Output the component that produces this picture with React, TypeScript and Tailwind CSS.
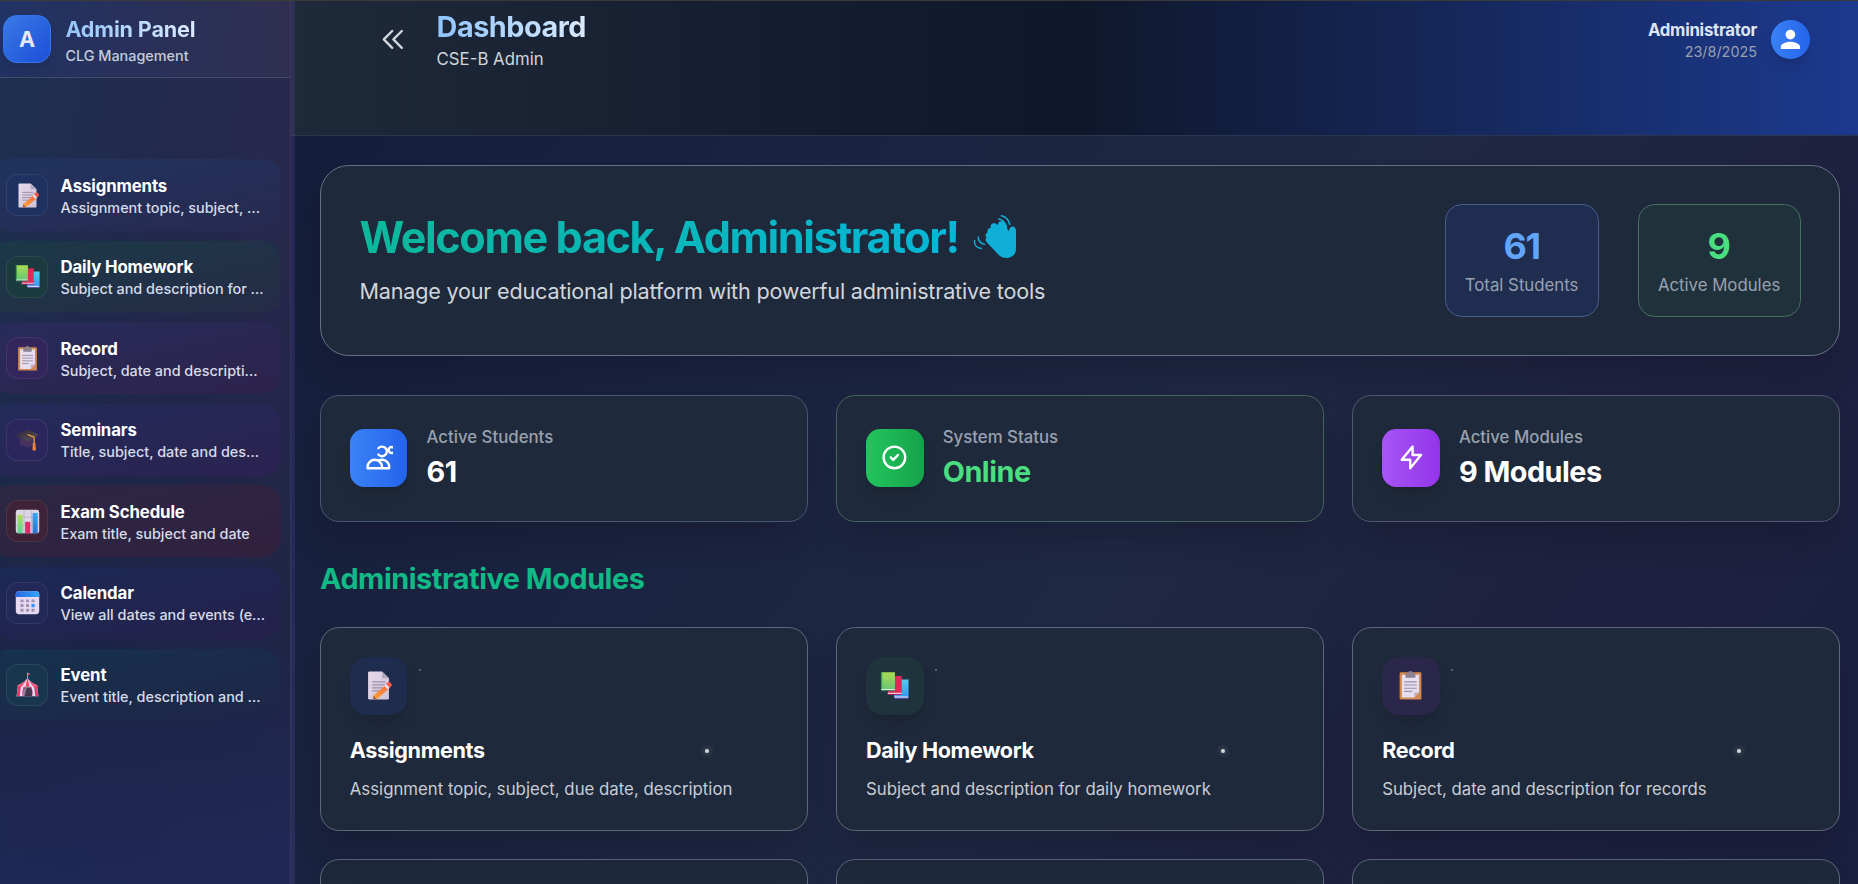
import React from "react";

type IconProps = { className?: string };

const MemoIcon = ({ className }: IconProps) => (
  <svg viewBox="0 0 32 32" className={className}>
    <defs>
      <linearGradient id="memoPage" x1="0" y1="0" x2="1" y2="1">
        <stop offset="0" stopColor="#e6d9ea" />
        <stop offset="1" stopColor="#cfc5d8" />
      </linearGradient>
      <linearGradient id="memoPencil" x1="0" y1="1" x2="1" y2="0">
        <stop offset="0" stopColor="#ffa63d" />
        <stop offset="1" stopColor="#f1683c" />
      </linearGradient>
    </defs>
    <path d="M4.500 2A1.500 1.500 0 0 1 6 .5H20L27.500 8v22a1.500 1.500 0 0 1-1.500 1.500H6A1.500 1.500 0 0 1 4.500 30z" fill="url(#memoPage)" />
    <path d="M20 .5V6.500A1.500 1.500 0 0 0 21.500 8H27.500z" fill="#b3a9bd" />
    <path d="M9.500 12h13.500M9.500 15.300h13.500M9.500 18.600h11M9.500 21.900h7" stroke="#9b90a6" strokeWidth="1.200" strokeLinecap="round" />
    <path d="M24.200 15.300l3.900 3.800L15 30.500l-4.600.800 0-4.200z" fill="url(#memoPencil)" />
    <path d="M10.400 27.200l3.400 3.600-3.600.500z" fill="#9d4a4a" />
    <path d="M24.400 14.300l4.100 4.200-2.300 2-4-4.100z" fill="#e8dcf0" />
    <path d="M26 12.600a2 2 0 0 1 2.800 0l1.300 1.400a2 2 0 0 1 0 2.800l-1.700 1.600-4.100-4.200z" fill="#fb5a4b" />
  </svg>
);

const BooksIcon = ({ className }: IconProps) => (
  <svg viewBox="0 0 32 32" className={className}>
    <defs>
      <linearGradient id="bookGreen" x1="0" y1="0" x2="0" y2="1">
        <stop offset="0" stopColor="#a8dc50" />
        <stop offset="1" stopColor="#66c977" />
      </linearGradient>
      <linearGradient id="bookBlue" x1="0" y1="0" x2="0" y2="1">
        <stop offset="0" stopColor="#55c8f5" />
        <stop offset="1" stopColor="#3597f3" />
      </linearGradient>
    </defs>
    <path d="M17 9.500h14.500v20H17a1.500 1.500 0 0 1-1.500-1.500V11z" fill="url(#bookBlue)" />
    <path d="M16 28h15v1.600H16z" fill="#dcd4f6" />
    <path d="M16 29.600h15.500v1H16z" fill="#5b57c5" />
    <path d="M9 5.500h15v19.500H9z" fill="#dc2b58" />
    <path d="M8.500 24H24v1.400H8.500z" fill="#f2c5dd" />
    <path d="M8.500 25.400H24v1H8.500z" fill="#a82459" />
    <path d="M2 1.500h14.500v19H1.500V2z" fill="url(#bookGreen)" />
    <path d="M1 2a.8.8 0 0 1 1.500-.500v19.800H1z" fill="#3f9c56" />
    <path d="M1.500 19.900h15v1.400h-15z" fill="#dff0ea" />
    <path d="M1.500 21.300h15v1h-15z" fill="#2f7d59" />
  </svg>
);

const ClipboardIcon = ({ className }: IconProps) => (
  <svg viewBox="0 0 32 32" className={className}>
    <rect x="4" y="1.500" width="24" height="30" rx="1.500" fill="#d28a50" />
    <path d="M6.500 4h19v19.500l-5.500 5.800H6.500z" fill="#e6dff0" />
    <path d="M25.500 23.500h-4a1.500 1.500 0 0 0-1.500 1.500v4.300z" fill="#bfb4cc" />
    <path d="M9.500 12h13M9.500 15.500h13M9.500 19h13M9.500 22.500h8" stroke="#9c90aa" strokeWidth="1.200" strokeLinecap="round" />
    <path d="M10.500 2.500H13.500a2.500 2.500 0 0 1 5 0H21.500v4a1 1 0 0 1-1 1h-9a1 1 0 0 1-1-1z" fill="#8b8391" />
  </svg>
);

const CapIcon = ({ className }: IconProps) => (
  <svg viewBox="0 0 32 32" className={className}>
    <defs>
      <linearGradient id="capTop" x1="0" y1="0" x2="1" y2="1">
        <stop offset="0" stopColor="#2e2933" />
        <stop offset="1" stopColor="#5d5262" />
      </linearGradient>
    </defs>
    <path d="M6 11v9.500c0 2.500 5 5 10.500 5S26 23 26 20.500V11z" fill="#46315f" />
    <path d="M1 10.500L15.500 3.500 31 9.500 17 18.500z" fill="url(#capTop)" />
    <path d="M16 9.500l8.500 3.500v9" fill="none" stroke="#f0a62c" strokeWidth="1.500" />
    <path d="M23 20.500h3l.800 8.500a2.500 2.500 0 0 1-4.500 0z" fill="#f0823a" />
  </svg>
);

const ChartIcon = ({ className }: IconProps) => (
  <svg viewBox="0 0 32 32" className={className}>
    <defs>
      <linearGradient id="barGreen" x1="0" y1="0" x2="0" y2="1">
        <stop offset="0" stopColor="#aede52" />
        <stop offset="1" stopColor="#56d69a" />
      </linearGradient>
      <linearGradient id="barBlue" x1="0" y1="0" x2="0" y2="1">
        <stop offset="0" stopColor="#38a9ef" />
        <stop offset="1" stopColor="#2b72cf" />
      </linearGradient>
    </defs>
    <rect x="1" y="1" width="30" height="30" rx="3" fill="#dcd6e4" />
    <path d="M11.500 1v30M21 1v30M1 10.500h30M1 21h30" stroke="#b8b0c4" strokeWidth="1" />
    <rect x="3.200" y="7.500" width="6.500" height="23.500" fill="url(#barGreen)" />
    <rect x="13" y="16.500" width="6.500" height="14.500" fill="#dc2d66" />
    <rect x="22.500" y="5" width="6.500" height="26" fill="url(#barBlue)" />
  </svg>
);

const CalendarIcon = ({ className }: IconProps) => (
  <svg viewBox="0 0 32 32" className={className}>
    <defs>
      <linearGradient id="calTop" x1="0" y1="0" x2="1" y2="0">
        <stop offset="0" stopColor="#2766e0" />
        <stop offset="1" stopColor="#35a8fb" />
      </linearGradient>
    </defs>
    <rect x="1" y="1.500" width="30" height="29.500" rx="4" fill="#e6d9f0" />
    <path d="M1 9V5.500a4 4 0 0 1 4-4h22a4 4 0 0 1 4 4V9z" fill="url(#calTop)" />
    <g fill="#a093b4">
      <rect x="7" y="12" width="4" height="3.800" rx=".8" />
      <rect x="14" y="12" width="4" height="3.800" rx=".8" />
      <rect x="21" y="12" width="4" height="3.800" rx=".8" />
      <rect x="7" y="18" width="4" height="3.800" rx=".8" />
      <rect x="14" y="18" width="4" height="3.800" rx=".8" />
      <rect x="7" y="24" width="4" height="3.800" rx=".8" />
      <rect x="14" y="24" width="4" height="3.800" rx=".8" />
      <rect x="21" y="24" width="4" height="3.800" rx=".8" />
    </g>
    <rect x="21" y="17.800" width="4.200" height="4.200" rx=".8" fill="#2c93f0" />
  </svg>
);

const TentIcon = ({ className }: IconProps) => (
  <svg viewBox="0 0 32 32" className={className}>
    <path d="M16 1v8" stroke="#e29a3a" strokeWidth="1.300" />
    <path d="M16.500 1l3.800 1.600-3.800 2z" fill="#ee4a5c" />
    <path d="M16 7.500c2 4 6.500 7 12.500 9.500v2l1.500 12H2l1.500-12v-2C9.500 14.500 14 11.500 16 7.500z" fill="#e4dcf2" />
    <path d="M16 7.500c-2 4-6.500 7-12.500 9.500l-.300 2.500 4 .500C11 17 14 12 16 7.500z" fill="#f0587a" />
    <path d="M16 7.500c2 4 6.500 7 12.500 9.500l.300 2.500-4 .500C21 17 18 12 16 7.500z" fill="#f0587a" />
    <path d="M16 7.500l-2.700 11.500h5.400z" fill="#ee4a5c" />
    <path d="M3.500 19h4l-1.500 12H2zM28.500 19h-4L26 31h4zM10.800 19h3.200l-3.500 6-2 6z M21.200 19H18l3.500 6 2 6z" fill="#e8386f" />
    <path d="M10 31v-5.500a6 6 0 0 1 12 0V31z" fill="#46364f" />
    <path d="M10 31v-5.500c0-3 3-5.500 5-5.500-1 4-2 8-3 11z" fill="#8d8098" />
  </svg>
);

const WaveIcon = ({ className }: IconProps) => (
  <svg viewBox="0 0 70 65" className={className} fill="none">
    <path
      d="M27.500 33.500c-2-1.700-.8-4.600 1.300-4.900-1.200-2.300.4-4.700 2.900-4.600-.7-3 1-5.300 4-4.800 1.700.3 2.400 1.200 2.900 2.200.3-2.500 1.400-4.200 3.300-4.200 2 0 3 1.200 4 2.900l3.700 7.200c1-2.200 1.400-4.200 3.400-4.700 2.200-.4 4 1.400 4 4.100v18c0 5.300-3.600 9.200-9.500 9.200-4 0-6.200-1.600-8.500-3.700L27.700 38.300c-1.500-1.600-1.600-3.400-.2-4.800z"
      fill="#0fafd8"
    />
    <path d="M39.800 15.100c4 .8 6.400 3.800 7.800 8.200M42.500 11.800c4.800.9 7 4 8.300 8.600M15.500 36.600c-.4 4.400 2.400 7.300 6.800 7.800M19.200 33c0 4 2.700 6.400 6.300 7.400" stroke="#10b1d8" strokeWidth="1.500" strokeLinecap="round" />
  </svg>
);

type NavItem = {
  title: string;
  text: string;
  Icon: React.FC<IconProps>;
  card: string;
  box: string;
};

const nav: NavItem[] = [
  { title: "Assignments", text: "Assignment topic, subject, due date, description", Icon: MemoIcon, card: "from-[#1e3460] to-[#28294f]", box: "bg-[#1f3161]" },
  { title: "Daily Homework", text: "Subject and description for daily homework", Icon: BooksIcon, card: "from-[#1a3948] to-[#252b46]", box: "bg-[#1b3b3f]" },
  { title: "Record", text: "Subject, date and description for records", Icon: ClipboardIcon, card: "from-[#272b5a] to-[#2d234c]", box: "bg-[#33265c]" },
  { title: "Seminars", text: "Title, subject, date and description", Icon: CapIcon, card: "from-[#222b5a] to-[#2b2250]", box: "bg-[#2c265f]" },
  { title: "Exam Schedule", text: "Exam title, subject and date", Icon: ChartIcon, card: "from-[#2c2844] to-[#30203e]", box: "bg-[#3e2338]" },
  { title: "Calendar", text: "View all dates and events (exams, seminars)", Icon: CalendarIcon, card: "from-[#1a2a56] to-[#24204a]", box: "bg-[#222858]" },
  { title: "Event", text: "Event title, description and date", Icon: TentIcon, card: "from-[#15324d] to-[#1e2547]", box: "bg-[#18374f]" },
];

const Sidebar = () => (
  <aside className="relative flex h-full w-[291px] shrink-0 flex-col overflow-hidden border-r border-[#38365a] bg-[linear-gradient(100deg,#1d3050_0%,#24294d_50%,#2d294c_100%)]">
    <div className="absolute inset-0 bg-[linear-gradient(172deg,rgba(22,34,66,0)_20%,rgba(25,34,66,0.7)_75%,rgba(28,40,92,0.75)_100%)]" />
    <div className="relative flex h-[77px] shrink-0 items-center gap-[14.4px] border-b border-[#434b6b] bg-[linear-gradient(95deg,#213365_0%,#2a3057_60%,#302f51_100%)] pl-[3px]">
      <div className="flex size-12 items-center justify-center rounded-[14.4px] border border-[#3b82f6]/60 bg-gradient-to-br from-[#3b79e6] to-[#1d4ed8] text-[21.6px] font-bold text-[#e5e9f3] shadow-lg">A</div>
      <div className="flex flex-col pt-[4px]">
        <span className="w-fit bg-gradient-to-r from-[#93c5fd] to-[#dbeafe] bg-clip-text text-[21.6px] leading-[29px] font-bold tracking-[-0.15px] text-transparent">Admin Panel</span>
        <span className="text-[14.4px] leading-[24px] font-medium text-[#c5cddc]">CLG Management</span>
      </div>
    </div>
    <nav className="relative mt-[81px] -ml-[9px] flex flex-col gap-[9.6px] pr-[9px]">
      {nav.map(({ title, text, Icon, card, box }) => (
        <div key={title} className={`flex h-[72px] items-center gap-[12.500px] rounded-[19.2px] bg-gradient-to-br pr-[15.500px] pl-[15px] ${card}`}>
          <div className={`flex size-[42px] shrink-0 items-center justify-center rounded-[12px] border border-white/8 ${box}`}>
            <Icon className="size-[25px]" />
          </div>
          <div className="flex min-w-0 flex-1 flex-col pt-[3px]">
            <span className="text-[16.8px] leading-[22px] font-bold tracking-[-0.12px] text-white">{title}</span>
            <span className="truncate text-[14.4px] leading-[22px] font-medium text-[#d6dce8]">{text}</span>
          </div>
        </div>
      ))}
    </nav>
  </aside>
);

const TopBar = () => (
  <header className="flex h-[135px] shrink-0 items-start justify-between border-b border-[#2a3550] bg-[linear-gradient(90deg,#1e2939_0%,#0f172a_50%,#1c398e_100%)] pr-[48px] pl-[88px]">
    <div className="flex items-start gap-[28.800px]">
      <svg viewBox="0 0 24 24" className="mt-[24px] size-[28.8px]" fill="none" stroke="#d1d5dc" strokeWidth="2" strokeLinecap="round" strokeLinejoin="round">
        <path d="M11 19l-7-7 7-7m8 14l-7-7 7-7" />
      </svg>
      <div className="flex flex-col pt-[7px]">
        <span className="w-fit bg-gradient-to-r from-[#8ec5ff] to-[#dbeafe] bg-clip-text text-[28.8px] leading-[38.4px] font-bold tracking-[-0.47px] text-transparent">Dashboard</span>
        <span className="mt-px text-[16.8px] leading-[24px] text-[#d1d5dc]">CSE-B Admin</span>
      </div>
    </div>
    <div className="mt-[17px] flex items-center gap-[14px]">
      <div className="flex flex-col items-end">
        <span className="text-[16.8px] leading-[24px] font-bold tracking-[-0.27px] text-[#dde4f2]">Administrator</span>
        <span className="text-[14.4px] leading-[19.2px] text-[#99a1af]">23/8/2025</span>
      </div>
      <div className="-mt-px flex size-[39px] items-center justify-center rounded-full bg-gradient-to-r from-[#3b82f6] to-[#2563eb] shadow-lg">
        <svg viewBox="0 0 24 24" className="size-[28.8px]" fill="#ffffff">
          <path d="M12 12c2.210 0 4-1.790 4-4s-1.790-4-4-4-4 1.790-4 4 1.790 4 4 4zm0 2c-2.670 0-8 1.340-8 4v2h16v-2c0-2.660-5.330-4-8-4z" />
        </svg>
      </div>
    </div>
  </header>
);

const panel = "border bg-[#1e293b] shadow-[0_24px_30px_-6px_rgba(20,20,40,0.35)]";

const Welcome = () => (
  <section className={`flex h-[191px] shrink-0 items-center justify-between rounded-[28.8px] border-[#667085] px-[38.4px] ${panel}`}>
    <div className="flex flex-col">
      <h1 className="flex items-center bg-[linear-gradient(90deg,#10b981_-35%,#06b6d4_80%)] bg-clip-text text-[43.2px] leading-[48px] font-bold tracking-[-1.39px] text-transparent">
        Welcome back, Administrator!
        <WaveIcon className="-my-2 h-[65px] w-[70px]" />
      </h1>
      <p className="mt-[13.500px] text-[21.6px] leading-[33.6px] tracking-[-0.195px] text-[#d1d5dc]">Manage your educational platform with powerful administrative tools</p>
    </div>
    <div className="flex gap-[39px]">
      <div className="flex h-[113px] w-[154px] flex-col items-center rounded-[16.8px] border border-[#475d8c] bg-[#1e2d50] pt-[20px]">
        <span className="text-[36px] leading-[43.200px] font-bold tracking-[-1.4px] text-[#60a5fa]">61</span>
        <span className="mt-[5px] text-[16.8px] leading-[24px] text-[#99a1af]">Total Students</span>
      </div>
      <div className="flex h-[113px] w-[163px] flex-col items-center rounded-[16.8px] border border-[#467060] bg-[#1f313b] pt-[20px]">
        <span className="text-[36px] leading-[43.200px] font-bold text-[#4ade80]">9</span>
        <span className="mt-[5px] text-[16.8px] leading-[24px] text-[#99a1af]">Active Modules</span>
      </div>
    </div>
  </section>
);

const stats = [
  {
    label: "Active Students",
    value: "61",
    color: "text-white",
    border: "border-[#475672]",
    tile: "from-[#3b82f6] to-[#2563eb]",
    path: "M12 4.354a4 4 0 110 5.292M15 21H3v-1a6 6 0 0112 0v1zm0 0h6v-1a6 6 0 00-9-5.197m13.5-9a2.500 2.500 0 11-5 0 2.500 2.500 0 015 0z",
  },
  {
    label: "System Status",
    value: "Online",
    color: "text-[#4ade80]",
    border: "border-[#46645f]",
    tile: "from-[#22c55e] to-[#16a34a]",
    path: "M9 12l2 2 4-4m6 2a9 9 0 11-18 0 9 9 0 0118 0z",
  },
  {
    label: "Active Modules",
    value: "9 Modules",
    color: "text-white",
    border: "border-[#535672]",
    tile: "from-[#a855f7] to-[#9333ea]",
    path: "M13 10V3L4 14h7v7l9-11h-7z",
  },
];

const modules = [
  { title: "Assignments", text: "Assignment topic, subject, due date, description", Icon: MemoIcon, tile: "bg-[#1e2c4d]" },
  { title: "Daily Homework", text: "Subject and description for daily homework", Icon: BooksIcon, tile: "bg-[#1e333b]" },
  { title: "Record", text: "Subject, date and description for records", Icon: ClipboardIcon, tile: "bg-[#2b274a]" },
];

export default function App() {
  return (
    <div className="flex h-[884px] w-[1858px] flex-col overflow-hidden bg-[#1a2340] font-['Inter',sans-serif] antialiased">
      <div className="h-px shrink-0 bg-[#3a3a38]" />
      <div className="flex min-h-0 flex-1">
        <Sidebar />
        <div className="relative flex min-w-0 flex-1 flex-col bg-[linear-gradient(125deg,#131c38_0%,#1b2440_35%,#1f2843_55%,#1e213f_78%,#1b2040_100%)]">
          <TopBar />
          <div className="pointer-events-none absolute inset-y-0 left-0 w-1 bg-[#8b6cf6]/15" />
          <main className="flex flex-col pt-[29px] pr-[18px] pl-[29px]">
            <Welcome />
            <section className="mt-[39px] grid shrink-0 grid-cols-3 gap-[28.500px]">
              {stats.map((s) => (
                <div key={s.label} className={`flex h-[127px] items-center gap-[19.2px] rounded-[19.2px] px-[28.8px] ${panel} ${s.border}`}>
                  <div className={`-mt-[1.500px] flex size-[57.6px] shrink-0 items-center justify-center rounded-[14.4px] bg-gradient-to-r shadow-lg ${s.tile}`}>
                    <svg viewBox="0 0 24 24" className="size-[28.8px] overflow-hidden" fill="none" stroke="#ffffff" strokeWidth="2" strokeLinecap="round" strokeLinejoin="round">
                      <path d={s.path} />
                    </svg>
                  </div>
                  <div className="flex flex-col gap-[4px] pb-px">
                    <span className="text-[16.8px] leading-[24px] font-medium text-[#99a1af]">{s.label}</span>
                    <span className={`text-[28.8px] leading-[38.4px] font-bold tracking-[-0.5px] ${s.color}`}>{s.value}</span>
                  </div>
                </div>
              ))}
            </section>
            <h2 className="mt-[38px] text-[28.8px] leading-[38.4px] font-bold tracking-[-0.45px] text-[#10b986]">Administrative Modules</h2>
            <section className="mt-[28.800px] grid shrink-0 grid-cols-3 gap-[28.500px]">
              {modules.map(({ title, text, Icon, tile }) => (
                <div key={title} className={`relative flex h-[203.6px] flex-col rounded-[19.2px] border-[#5f6878] p-[28.8px] ${panel}`}>
                  <div className={`flex size-[57.6px] items-center justify-center rounded-[16.8px] shadow-lg ${tile}`}>
                    <Icon className="size-[29px]" />
                  </div>
                  <h3 className="mt-[19.2px] text-[21.6px] leading-[33.6px] font-bold tracking-[-0.36px] text-white">{title}</h3>
                  <p className="mt-[9.6px] text-[16.8px] leading-[24px] text-[#c8ccd4]">{text}</p>
                  <span className="absolute top-[41px] left-[98px] size-[2px] rounded-full bg-[#667080]" />
                  <span className="absolute top-[121px] left-[384px] size-[3.500px] rounded-full bg-[#d5d8dd] shadow-[0_0_5px_2px_rgba(255,255,255,0.14)]" />
                </div>
              ))}
            </section>
            <section className="mt-[28.500px] grid shrink-0 grid-cols-3 gap-[28.500px]">
              {modules.map(({ title }) => (
                <div key={title} className={`h-[203.6px] rounded-[19.2px] border-[#5f6878] ${panel}`} />
              ))}
            </section>
          </main>
        </div>
      </div>
    </div>
  );
}
